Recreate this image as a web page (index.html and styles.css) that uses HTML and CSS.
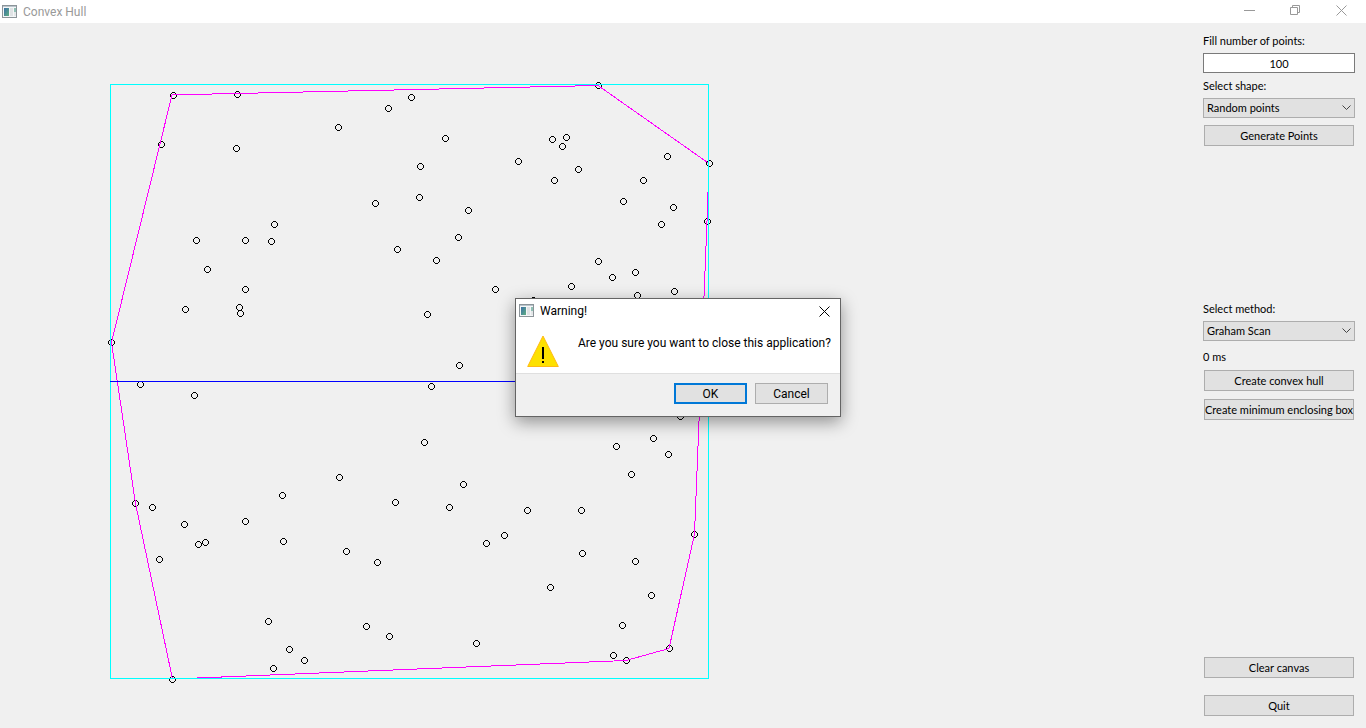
FILE: index.html
```html
<!DOCTYPE html>
<html lang="en">
<head>
<meta charset="utf-8">
<title>Convex Hull</title>
<link rel="stylesheet" href="styles.css">
</head>
<body>
<svg class="defs" aria-hidden="true">
  <defs>
    <linearGradient id="iconPane" x1="0" y1="0" x2="1" y2="1">
      <stop offset="0" stop-color="#3a6fa5"/>
      <stop offset="1" stop-color="#5fae82"/>
    </linearGradient>
    <symbol id="appIcon" viewBox="0 0 16 14">
      <rect x="0.5" y="0.5" width="14" height="12" fill="#f4f6f7" stroke="#8c9499"/>
      <path d="M1 1.5h13" stroke="#b9c4cb"/>
      <rect x="2" y="3" width="5" height="8" fill="url(#iconPane)"/>
      <rect x="8" y="3" width="3" height="8" fill="#dfe2e4"/>
      <rect x="12" y="3" width="2" height="4" fill="#8fc0b4"/>
      <rect x="12" y="7" width="2" height="4" fill="#e3e6e8"/>
    </symbol>
  </defs>
</svg>
<div class="window">
  <header class="titlebar">
    <svg class="app-icon" aria-hidden="true"><use href="#appIcon"/></svg>
    <h1 class="title">Convex Hull</h1>
    <div class="window-controls">
      <button type="button" aria-label="Minimize"><svg width="11" height="11"><path d="M0 5.5h11"/></svg></button>
      <button type="button" aria-label="Restore"><svg width="11" height="11"><path d="M0.5 2.5h7v7h-7zM2.5 2.5v-2h7v7h-2"/></svg></button>
      <button type="button" aria-label="Close"><svg width="11" height="11"><path d="M0.5 0.5l10 10M10.5 0.5l-10 10"/></svg></button>
    </div>
  </header>
  <main class="content">
    <svg class="canvas" role="img" aria-label="Point set with convex hull and enclosing box">
      <g transform="translate(0 -23)">
        <g id="points"></g>
        <path class="hull" d="M172 94.9L598 85.5L709 163.5L707 221.5L694.5 534L669 648.5L626 660.5L172.5 679L135.5 503.5L111.5 342.5Z"/>
        <rect class="box" x="110.5" y="84.5" width="598" height="594"/>
        <path class="split" d="M110 381.5H709"/>
      </g>
    </svg>
    <form class="panel">
      <label for="count">Fill number of points:</label>
      <input id="count" class="field" type="text" value="100">
      <label for="shape">Select shape:</label>
      <div class="combo">
        <select id="shape"><option>Random points</option></select>
        <svg class="chevron" width="9" height="6"><path d="M0.5 0.5l4 4l4-4"/></svg>
      </div>
      <button class="btn" type="button">Generate Points</button>
      <div class="spacer-top"></div>
      <label for="method">Select method:</label>
      <div class="combo">
        <select id="method"><option>Graham Scan</option></select>
        <svg class="chevron" width="9" height="6"><path d="M0.5 0.5l4 4l4-4"/></svg>
      </div>
      <output class="time">0 ms</output>
      <button class="btn" type="button">Create convex hull</button>
      <button class="btn spaced" type="button">Create minimum enclosing box</button>
      <div class="spacer-bottom"></div>
      <button class="btn" type="button">Clear canvas</button>
      <button class="btn quit" type="button">Quit</button>
    </form>
  </main>
</div>
<div class="dialog" role="alertdialog" aria-labelledby="dlgTitle" aria-describedby="dlgText">
  <div class="dialog-title">
    <svg class="app-icon" aria-hidden="true"><use href="#appIcon"/></svg>
    <h2 id="dlgTitle">Warning!</h2>
    <button class="dialog-close" type="button" aria-label="Close"><svg width="11" height="11"><path d="M0.5 0.5l10 10M10.5 0.5l-10 10"/></svg></button>
  </div>
  <div class="dialog-body">
    <svg class="warning" width="32" height="32" aria-hidden="true">
      <path d="M16 1L31.3 31.5H0.7z" fill="#fde100" stroke="#ffb914"/>
      <path d="M15 12h2v12h-2zM15 26h2v2h-2z"/>
    </svg>
    <p id="dlgText">Are you sure you want to close this application?</p>
  </div>
  <div class="dialog-actions">
    <button class="btn default" type="button">OK</button>
    <button class="btn" type="button">Cancel</button>
  </div>
</div>
<script src="points.js"></script>
</body>
</html>
```
FILE: styles.css
```css
* { box-sizing: border-box; }
html, body { height: 100%; }
body {
  margin: 0;
  background: #f0f0f0;
  color: #000;
  font-family: Lato, "Noto Sans", sans-serif;
  font-size: 11px;
  line-height: 14px;
  overflow: hidden;
}
button, input, select { font: inherit; color: inherit; }
.defs { position: absolute; width: 0; height: 0; }
.window { display: flex; flex-direction: column; height: 100%; }

.titlebar {
  display: flex;
  align-items: center;
  height: 23px;
  background: #fff;
  padding-left: 2px;
  font-family: Roboto, "Noto Sans", sans-serif;
}
.app-icon { width: 16px; height: 14px; flex: none; }
.title { margin: 0 0 0 5px; font-size: 12px; font-weight: 400; color: #999; }
.window-controls { display: flex; align-self: flex-start; margin-left: auto; padding-right: 2px; }
.window-controls button {
  display: flex;
  justify-content: center;
  align-items: center;
  width: 46px;
  height: 21px;
  padding: 0;
  border: 0;
  background: none;
}
.window-controls path { fill: none; stroke: #999; }

.content { display: flex; flex: 1; min-height: 0; }
.canvas { flex: 1; min-width: 0; height: 100%; shape-rendering: crispEdges; }
.hull { fill: none; stroke: #f0f; }
.box { fill: none; stroke: #0ff; }
.split { fill: none; stroke: #00f; }
.point { fill: #000; }

.panel {
  display: flex;
  flex-direction: column;
  width: 163px;
  padding: 10px 11px 12px 0;
}
.panel label { line-height: 15px; }
.field {
  width: 100%;
  height: 20px;
  margin: 5px 0;
  padding: 0 2px;
  border: 1px solid #7a7a7a;
  background: #fff;
  text-align: center;
}
.combo { display: grid; align-items: center; margin: 5px 0 7px; }
.combo select {
  grid-area: 1 / 1;
  width: 100%;
  height: 20px;
  padding: 0 3px;
  border: 1px solid #adadad;
  border-radius: 0;
  background: #e1e1e1;
  appearance: none;
}
.chevron { grid-area: 1 / 1; justify-self: end; margin-right: 4px; pointer-events: none; }
.chevron path { fill: none; stroke: #444; }
.btn {
  height: 21px;
  padding: 0;
  border: 1px solid #adadad;
  background: #e1e1e1;
  white-space: nowrap;
}
.panel .btn { margin: 0 1px; }
.panel .spaced { margin-top: 8px; }
.panel .quit { margin-top: 17px; }
.spacer-top { flex: 155; }
.spacer-bottom { flex: 237; }
.time { margin: 2px 0 6px; }

.dialog {
  position: absolute;
  left: 50%;
  top: 298px;
  width: 326px;
  margin-left: -168px;
  border: 1px solid #646464;
  background: #fff;
  box-shadow: 0 5px 16px rgba(0, 0, 0, 0.4);
  font-family: Roboto, "Noto Sans", sans-serif;
  font-size: 12px;
}
.dialog-title { display: flex; align-items: center; height: 24px; padding: 0 10px 0 3px; }
.dialog-title h2 { margin: 0 0 0 5px; font-size: 12px; font-weight: 400; }
.dialog-close { display: flex; margin-left: auto; padding: 0; border: 0; background: none; }
.dialog-close path { fill: none; stroke: #000; }
.dialog-body { display: flex; height: 51px; padding: 12px 10px 0 11px; border-bottom: 1px solid #dfdfdf; }
.warning { flex: none; margin-right: 19px; }
.dialog-body p { margin: 0; line-height: 16px; white-space: nowrap; }
.dialog-actions {
  display: flex;
  justify-content: flex-end;
  gap: 8px;
  padding: 9px 12px 12px;
  background: #f0f0f0;
}
.dialog-actions .btn { width: 73px; }
.dialog-actions .default { border: 2px solid #0078d7; }
```
FILE: points.js
```js
const points = [
  [173,95],[237,94],[236,148],[161,144],[338,127],[388,108],[375,203],[196,240],[245,240],[274,224],
  [271,241],[397,249],[207,269],[245,289],[185,309],[239,307],[240,313],[111,342],[140,384],[194,395],
  [411,97],[445,138],[420,166],[419,197],[468,210],[458,237],[436,260],[495,289],[427,314],[459,365],
  [431,386],[518,161],[552,139],[566,137],[562,146],[578,169],[554,180],[598,85],[667,156],[643,180],
  [623,201],[673,207],[661,224],[709,163],[707,221],[598,261],[612,277],[635,272],[571,286],[637,295],
  [674,291],[533,300],[135,503],[152,507],[184,524],[198,544],[205,542],[159,559],[245,521],[282,495],
  [283,541],[339,477],[395,502],[346,551],[377,562],[268,621],[366,626],[389,636],[289,649],[304,660],
  [273,668],[172,679],[424,442],[463,484],[449,507],[527,510],[581,510],[504,535],[486,543],[582,553],
  [635,561],[550,587],[651,595],[622,625],[476,643],[613,655],[626,660],[669,648],[694,534],[616,446],
  [653,438],[631,474],[668,454],[680,416]
];
const ring = "m-1-3h3v1h-3zm-1 1h1v1h-1zm4 0h1v1h-1zm-5 1h1v3h-1zm6 0h1v3h-1zm-5 3h1v1h-1zm4 0h1v1h-1zm-3 1h3v1h-3z";
const layer = document.getElementById("points");
for (const [x, y] of points) {
  const p = document.createElementNS("http://www.w3.org/2000/svg", "path");
  p.setAttribute("class", "point");
  p.setAttribute("d", `M${x} ${y}${ring}`);
  layer.appendChild(p);
}
```
